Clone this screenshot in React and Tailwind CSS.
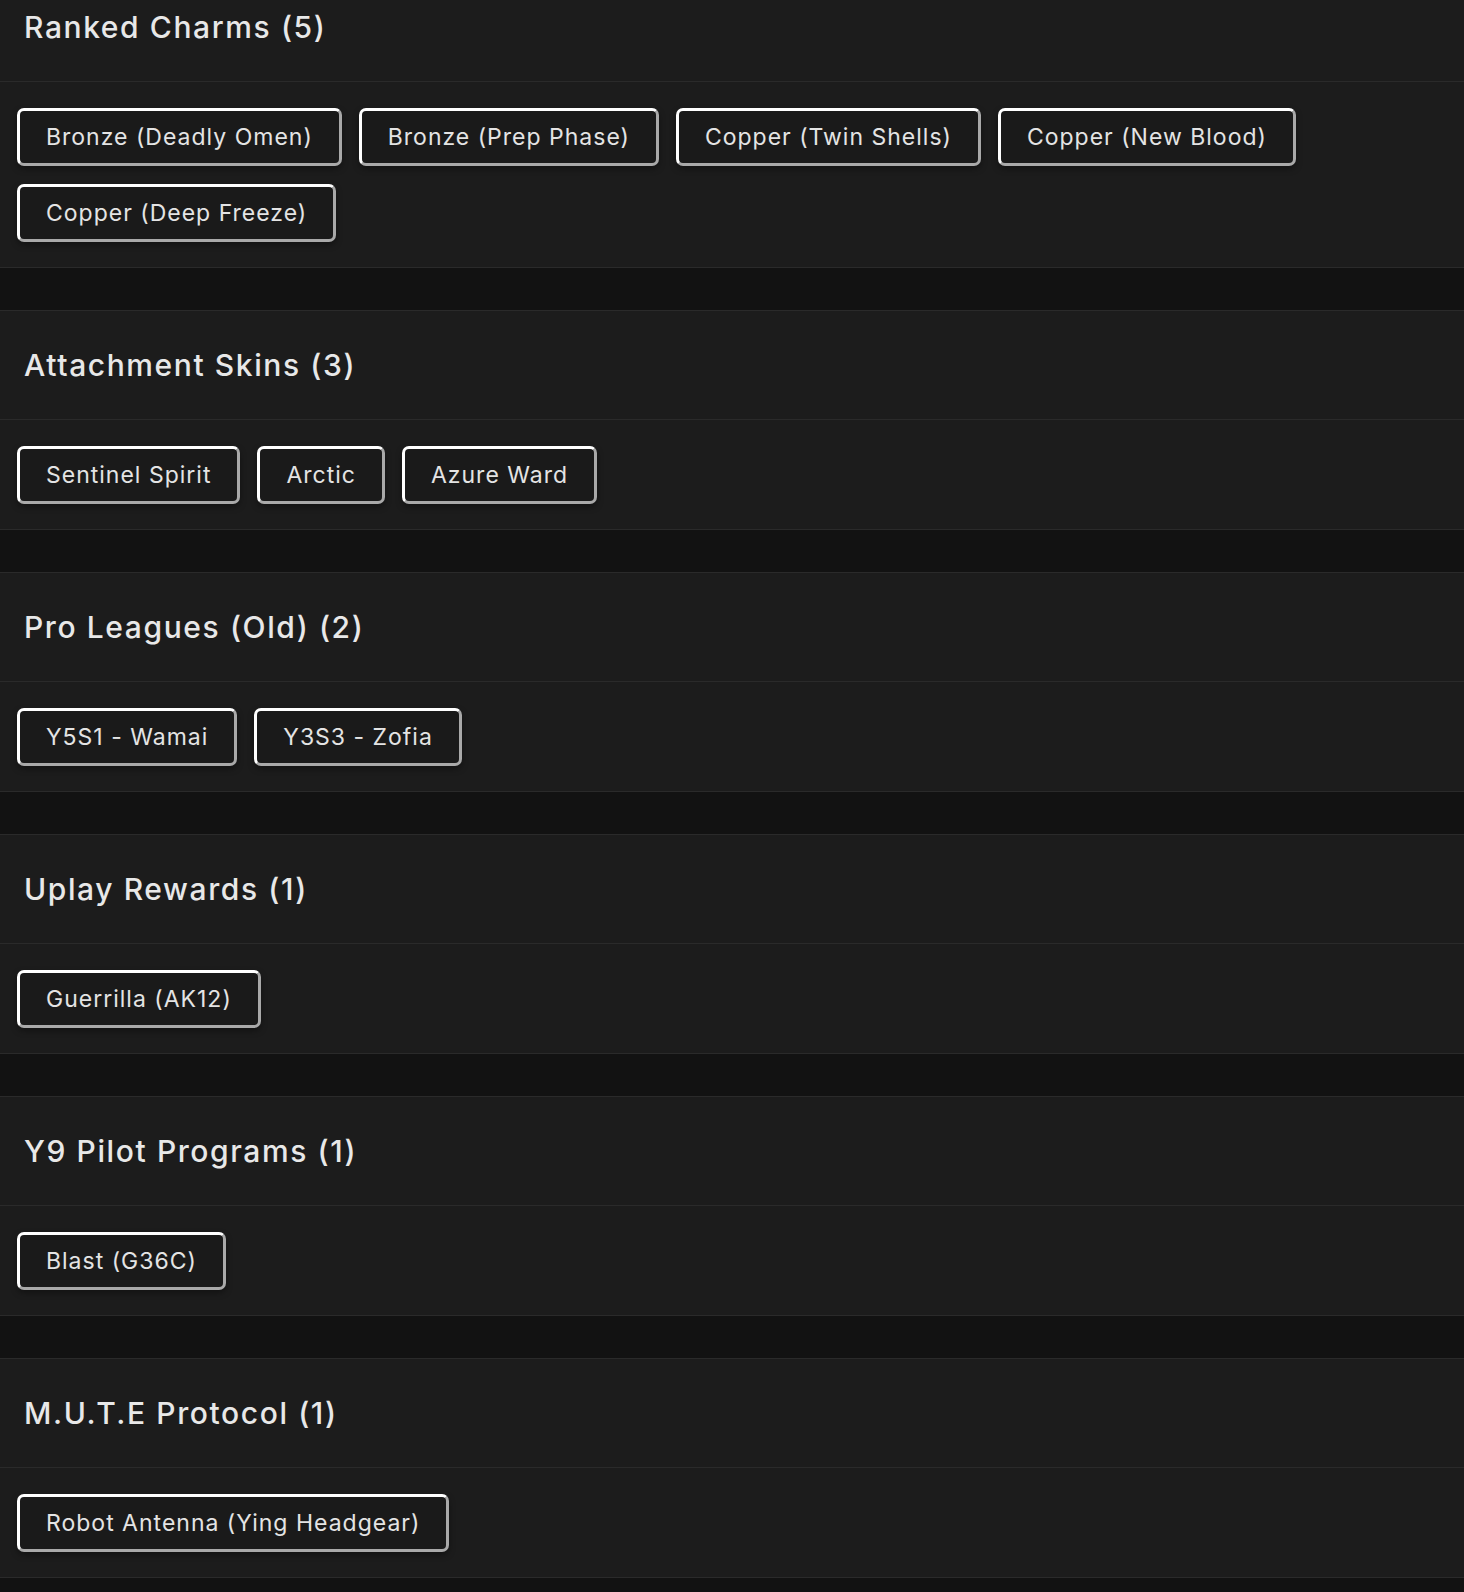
import React from "react";

const sections = [
  { title: "Ranked Charms (5)", items: ["Bronze (Deadly Omen)", "Bronze (Prep Phase)", "Copper (Twin Shells)", "Copper (New Blood)", "Copper (Deep Freeze)"] },
  { title: "Attachment Skins (3)", items: ["Sentinel Spirit", "Arctic", "Azure Ward"] },
  { title: "Pro Leagues (Old) (2)", items: ["Y5S1 - Wamai", "Y3S3 - Zofia"] },
  { title: "Uplay Rewards (1)", items: ["Guerrilla (AK12)"] },
  { title: "Y9 Pilot Programs (1)", items: ["Blast (G36C)"] },
  { title: "M.U.T.E Protocol (1)", items: ["Robot Antenna (Ying Headgear)"] },
];

export default function App() {
  return (
    <div
      className="w-[1464px] h-[1592px] overflow-hidden bg-[#121212]"
      style={{ fontFamily: "Inter, 'Open Sans', sans-serif" }}
    >
      <div className="flex flex-col gap-[42px] mt-[-28px]">
        {sections.map((s) => (
          <section key={s.title} className="bg-[#1c1c1c] border-y border-[#2a2a2a]">
            <div className="h-[109px] flex items-center px-6 border-b border-[#2a2a2a]">
              <h2 className="text-[30px] font-medium text-[#e8e8e8] tracking-[1.6px]">{s.title}</h2>
            </div>
            <div className="flex flex-wrap gap-x-[17px] gap-y-[18px] px-[17px] pt-[26px] pb-[25px]">
              {s.items.map((it) => (
                <button
                  key={it}
                  className="h-[58px] px-[26px] rounded-[7px] border-[3px] border-t-white border-l-white border-r-[#a9a9a9] border-b-[#a9a9a9] bg-[#1a1a1a] text-[#e4e4e4] text-[23px] tracking-[1px] shadow-[0_3px_6px_rgba(0,0,0,0.35)] whitespace-nowrap"
                >
                  {it}
                </button>
              ))}
            </div>
          </section>
        ))}
      </div>
    </div>
  );
}
